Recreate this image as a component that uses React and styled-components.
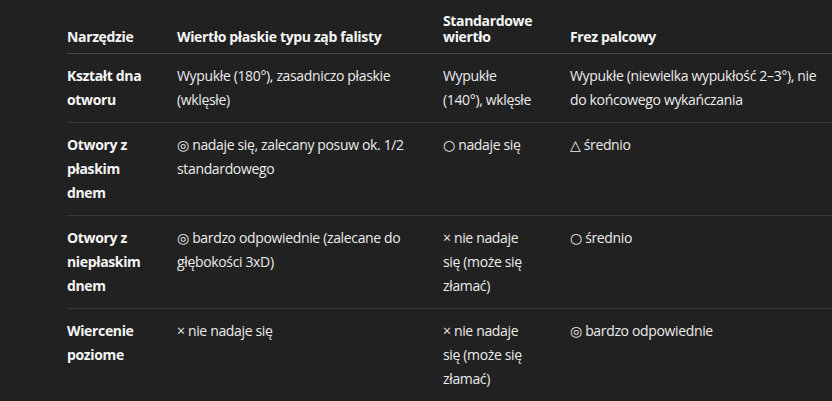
import React from "react";
import styled, { createGlobalStyle } from "styled-components";

const Global = createGlobalStyle`
  html, body {
    margin: 0;
    padding: 0;
    background: #212121;
    overflow: hidden;
  }
  body {
    font-family: "Open Sans", "Noto Sans", "DejaVu Sans", sans-serif;
    color: #ececec;
  }
`;

const Page = styled.div`
  padding: 5px 0 0 67px;
`;

const Table = styled.table`
  width: 765px;
  border-collapse: collapse;
  table-layout: fixed;
  font-size: 14px;
  letter-spacing: -0.35px;
`;

const Col = styled.col`
  width: ${(p) => p.$w}px;
`;

const Th = styled.th`
  text-align: left;
  vertical-align: bottom;
  font-weight: 700;
  color: #f5f5f5;
  line-height: 16px;
  padding: 8px 16px;
  border-bottom: 1px solid #454545;
  &:first-child { padding-left: 0; }
  &:last-child { padding-right: 0; }
`;

const Tr = styled.tr`
  border-bottom: 1px solid #383838;
  &:last-child { border-bottom: none; }
`;

const Td = styled.td`
  vertical-align: top;
  line-height: 24px;
  padding: 10px 16px;
  font-weight: ${(p) => (p.$head ? 700 : 400)};
  color: ${(p) => (p.$head ? "#f5f5f5" : "#ececec")};
  &:first-child { padding-left: 0; }
  &:last-child { padding-right: 0; }
`;

const headers = [
  "Narzędzie",
  "Wiertło płaskie typu ząb falisty",
  "Standardowe wiertło",
  "Frez palcowy",
];

const rows = [
  [
    "Kształt dna otworu",
    "Wypukłe (180°), zasadniczo płaskie (wklęsłe)",
    "Wypukłe (140°), wklęsłe",
    "Wypukłe (niewielka wypukłość 2–3°), nie do końcowego wykańczania",
  ],
  [
    "Otwory z płaskim dnem",
    "◎ nadaje się, zalecany posuw ok. 1/2 standardowego",
    "○ nadaje się",
    "△ średnio",
  ],
  [
    "Otwory z niepłaskim dnem",
    "◎ bardzo odpowiednie (zalecane do głębokości 3xD)",
    "× nie nadaje się (może się złamać)",
    "○ średnio",
  ],
  [
    "Wiercenie poziome",
    "× nie nadaje się",
    "× nie nadaje się (może się złamać)",
    "◎ bardzo odpowiednie",
  ],
];

const widths = [94, 266, 127, 278];

export default function App() {
  return (
    <>
      <Global />
      <Page>
        <Table>
          <colgroup>
            {widths.map((w, i) => (
              <Col key={i} $w={w} />
            ))}
          </colgroup>
          <thead>
            <tr>
              {headers.map((h) => (
                <Th key={h}>{h}</Th>
              ))}
            </tr>
          </thead>
          <tbody>
            {rows.map((r, i) => (
              <Tr key={i}>
                {r.map((c, j) => (
                  <Td key={j} $head={j === 0}>
                    {c}
                  </Td>
                ))}
              </Tr>
            ))}
          </tbody>
        </Table>
      </Page>
    </>
  );
}
